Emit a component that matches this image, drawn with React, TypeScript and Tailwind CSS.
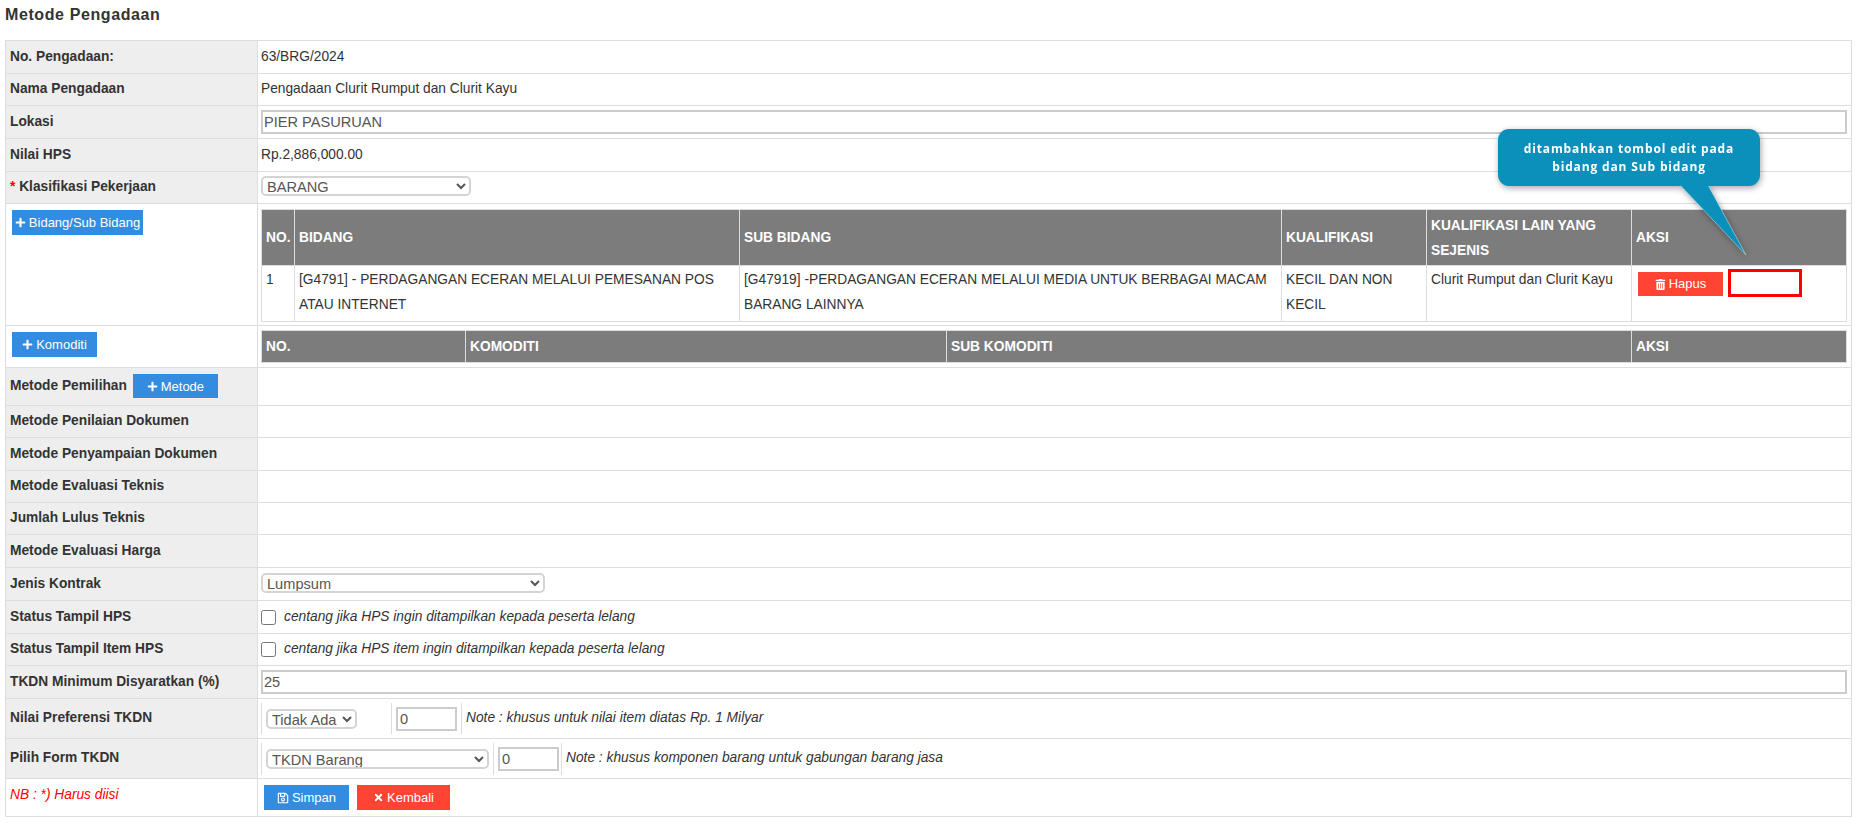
import React from "react";
import { FaPlus, FaTrashAlt, FaRegSave, FaTimes } from "react-icons/fa";

const Btn = ({ color, icon, label, w, h = "h-[25px]" }: { color: string; icon: React.ReactNode; label: string; w: string; h?: string }) => (
  <span className={`inline-flex items-center justify-center gap-[3px] text-white text-[13px] ${color} ${w} ${h}`}>
    {icon}
    {label}
  </span>
);

const Label = ({ children, h }: { children: React.ReactNode; h: string }) => (
  <td className={`border border-[#ddd] bg-[#eee] pl-[4px] pr-1 font-bold text-[13.75px] text-[#333] align-middle ${h}`}>{children}</td>
);

const Val = ({ children }: { children?: React.ReactNode }) => (
  <td className="border border-[#ddd] pl-[3px] pr-[4px] text-[13.75px] text-[#333] align-middle">{children}</td>
);

const Row = ({ label, h, children }: { label: React.ReactNode; h: string; children?: React.ReactNode }) => (
  <tr>
    <Label h={h}>{label}</Label>
    <Val>{children}</Val>
  </tr>
);

const Th = ({ children }: { children: React.ReactNode }) => (
  <th className="border-l border-[#ddd] first:border-l-0 bg-[#7c7c7c] text-white font-bold text-[13.75px] text-left px-1 leading-[25px] align-middle">{children}</th>
);

const Td = ({ children }: { children?: React.ReactNode }) => (
  <td className="border border-[#ddd] px-1 py-0 text-[13.75px] text-[#333] leading-[25px] align-top pt-[1px]">{children}</td>
);

const TextInput = ({ value }: { value: string }) => (
  <input
    readOnly
    value={value}
    className="block w-full h-[24px] border-2 border-[#ccc] bg-white px-[1px] text-[14.6px] text-[#555] outline-none"
  />
);

const Select = ({ value, w }: { value: string; w: string }) => (
  <select
    defaultValue={value}
    className={`${w} h-[20px] border-2 border-[#d4d4d4] rounded-[5px] bg-white pl-0 text-[14.6px] leading-[16px] text-[#555] outline-none`}
  >
    <option>{value}</option>
  </select>
);

const Check = () => <input type="checkbox" className="w-[15px] h-[15px] m-0 align-middle" />;

export default function App() {
  return (
    <div className="relative w-[1857px] h-[826px] overflow-hidden bg-white px-[5px] font-['Liberation_Sans',Arial,sans-serif] text-[#333]">
      <h1 className="h-[40px] pt-[5px] text-[16px] leading-[20px] font-bold tracking-[0.6px] text-[#333]">Metode Pengadaan</h1>
      <table className="w-full table-fixed border-collapse border border-[#ddd]">
        <colgroup>
          <col className="w-[252px]" />
          <col />
        </colgroup>
        <tbody>
          <Row label="No. Pengadaan:" h="h-[33px]">63/BRG/2024</Row>
          <Row label="Nama Pengadaan" h="h-[32px]">Pengadaan Clurit Rumput dan Clurit Kayu</Row>
          <Row label="Lokasi" h="h-[33px]"><TextInput value="PIER PASURUAN" /></Row>
          <Row label="Nilai HPS" h="h-[33px]">Rp.2,886,000.00</Row>
          <Row
            label={<><span className="text-[#ff0000]">*</span> Klasifikasi Pekerjaan</>}
            h="h-[32px]"
          >
            <Select value="BARANG" w="w-[210px]" />
          </Row>
          <tr>
            <td className="border border-[#ddd] h-[122px] align-top pl-[6px] pt-[6px]">
              <Btn color="bg-[#348ce0]" icon={<FaPlus size={11} />} label="Bidang/Sub Bidang" w="w-[131px]" />
            </td>
            <td className="border border-[#ddd] pl-[3px] pr-[4px] align-top pt-[5px]">
              <table className="w-full table-fixed border-collapse border border-[#ddd]">
                <colgroup>
                  <col className="w-[33px]" />
                  <col className="w-[445px]" />
                  <col className="w-[542px]" />
                  <col className="w-[145px]" />
                  <col className="w-[205px]" />
                  <col />
                </colgroup>
                <thead>
                  <tr className="h-[56px]">
                    <Th>NO.</Th>
                    <Th>BIDANG</Th>
                    <Th>SUB BIDANG</Th>
                    <Th>KUALIFIKASI</Th>
                    <Th>KUALIFIKASI LAIN YANG SEJENIS</Th>
                    <Th>AKSI</Th>
                  </tr>
                </thead>
                <tbody>
                  <tr className="h-[56px]">
                    <Td>1</Td>
                    <Td>[G4791] - PERDAGANGAN ECERAN MELALUI PEMESANAN POS ATAU INTERNET</Td>
                    <Td>[G47919] -PERDAGANGAN ECERAN MELALUI MEDIA UNTUK BERBAGAI MACAM BARANG LAINNYA</Td>
                    <Td>KECIL DAN NON KECIL</Td>
                    <Td>Clurit Rumput dan Clurit Kayu</Td>
                    <td className="border border-[#ddd] align-top pl-[6px] pt-[3px]">
                      <div className="flex items-start gap-[5px]">
                        <span className="mt-[3px]">
                          <Btn color="bg-[#ff4433]" icon={<FaTrashAlt size={11} />} label="Hapus" w="w-[85px]" h="h-[24px]" />
                        </span>
                        <span className="block w-[74px] h-[28px] border-[3px] border-[#ff0000] bg-white" />
                      </div>
                    </td>
                  </tr>
                </tbody>
              </table>
            </td>
          </tr>
          <tr>
            <td className="border border-[#ddd] h-[42px] align-top pl-[6px] pt-[6px]">
              <Btn color="bg-[#348ce0]" icon={<FaPlus size={11} />} label="Komoditi" w="w-[85px]" />
            </td>
            <td className="border border-[#ddd] pl-[3px] pr-[4px] align-top pt-[4px]">
              <table className="w-full table-fixed border-collapse border border-[#ddd]">
                <colgroup>
                  <col className="w-[204px]" />
                  <col className="w-[481px]" />
                  <col className="w-[685px]" />
                  <col />
                </colgroup>
                <thead>
                  <tr className="h-[32px]">
                    <Th>NO.</Th>
                    <Th>KOMODITI</Th>
                    <Th>SUB KOMODITI</Th>
                    <Th>AKSI</Th>
                  </tr>
                </thead>
              </table>
            </td>
          </tr>
          <Row
            label={
              <span className="inline-flex items-center gap-[6px]">
                Metode Pemilihan
                <span className="font-normal">
                  <Btn color="bg-[#348ce0]" icon={<FaPlus size={11} />} label="Metode" w="w-[85px]" h="h-[24px]" />
                </span>
              </span>
            }
            h="h-[38px]"
          />
          <Row label="Metode Penilaian Dokumen" h="h-[32px]" />
          <Row label="Metode Penyampaian Dokumen" h="h-[33px]" />
          <Row label="Metode Evaluasi Teknis" h="h-[32px]" />
          <Row label="Jumlah Lulus Teknis" h="h-[32px]" />
          <Row label="Metode Evaluasi Harga" h="h-[33px]" />
          <Row label="Jenis Kontrak" h="h-[33px]"><Select value="Lumpsum" w="w-[284px]" /></Row>
          <Row label="Status Tampil HPS" h="h-[33px]">
            <span className="flex items-center gap-[8px] italic"><Check />centang jika HPS ingin ditampilkan kepada peserta lelang</span>
          </Row>
          <Row label="Status Tampil Item HPS" h="h-[32px]">
            <span className="flex items-center gap-[8px] italic"><Check />centang jika HPS item ingin ditampilkan kepada peserta lelang</span>
          </Row>
          <Row label="TKDN Minimum Disyaratkan (%)" h="h-[33px]"><TextInput value="25" /></Row>
          <tr>
            <Label h="h-[40px]">Nilai Preferensi TKDN</Label>
            <td className="border border-[#ddd] pl-[3px] pr-[4px] align-middle">
              <table className="border-collapse text-[13.75px]">
                <tbody>
                  <tr className="h-[31px]">
                    <td className="border-l border-[#ddd] w-[130px] pl-[4px] align-middle"><Select value="Tidak Ada" w="w-[91px] block" /></td>
                    <td className="border-l border-[#ddd] w-[70px] pl-[4px] align-middle">
                      <input readOnly value="0" className="block w-[61px] h-[24px] border-2 border-[#ccc] px-[2px] text-[14.6px] text-[#555] outline-none" />
                    </td>
                    <td className="border-l border-[#ddd] pl-[4px] italic align-middle text-[#333]">Note : khusus untuk nilai item diatas Rp. 1 Milyar</td>
                  </tr>
                </tbody>
              </table>
            </td>
          </tr>
          <tr>
            <Label h="h-[40px]">Pilih Form TKDN</Label>
            <td className="border border-[#ddd] pl-[3px] pr-[4px] align-middle">
              <table className="border-collapse text-[13.75px]">
                <tbody>
                  <tr className="h-[32px]">
                    <td className="border-l border-[#ddd] w-[232px] pl-[4px] align-middle"><Select value="TKDN Barang" w="w-[223px] block" /></td>
                    <td className="border-l border-[#ddd] w-[68px] pl-[4px] align-middle">
                      <input readOnly value="0" className="block w-[61px] h-[24px] border-2 border-[#ccc] px-[2px] text-[14.6px] text-[#555] outline-none" />
                    </td>
                    <td className="border-l border-[#ddd] pl-[4px] italic align-middle text-[#333]">Note : khusus komponen barang untuk gabungan barang jasa</td>
                  </tr>
                </tbody>
              </table>
            </td>
          </tr>
          <tr>
            <td className="border border-[#ddd] h-[38px] pl-[4px] align-top pt-[6px] italic text-[13.75px] text-[#ff0000]">NB : *) Harus diisi</td>
            <td className="border border-[#ddd] px-[6px] align-middle">
              <div className="flex gap-[8px]">
                <Btn color="bg-[#348ce0]" icon={<FaRegSave size={12} />} label="Simpan" w="w-[85px]" />
                <Btn color="bg-[#ff4433]" icon={<FaTimes size={11} />} label="Kembali" w="w-[93px]" />
              </div>
            </td>
          </tr>
        </tbody>
      </table>

      <div className="absolute left-[1498px] top-[129px] w-[262px] h-[127px] drop-shadow-[1px_2px_3px_rgba(0,0,0,0.35)]">
        <svg className="absolute left-0 top-0" width="262" height="127" viewBox="0 0 262 127">
          <polygon points="182,56 210,56 248,126" fill="#0b90bb" stroke="#d8eef5" strokeWidth="0.5" />
        </svg>
        <div className="absolute left-0 top-0 w-[262px] h-[57px] rounded-[11px] bg-[#0b90bb] flex items-center justify-center text-center text-white font-bold text-[12px] leading-[18px] tracking-[0.85px] font-['Open_Sans',sans-serif]">
          ditambahkan tombol edit pada<br />bidang dan Sub bidang
        </div>
      </div>
    </div>
  );
}
